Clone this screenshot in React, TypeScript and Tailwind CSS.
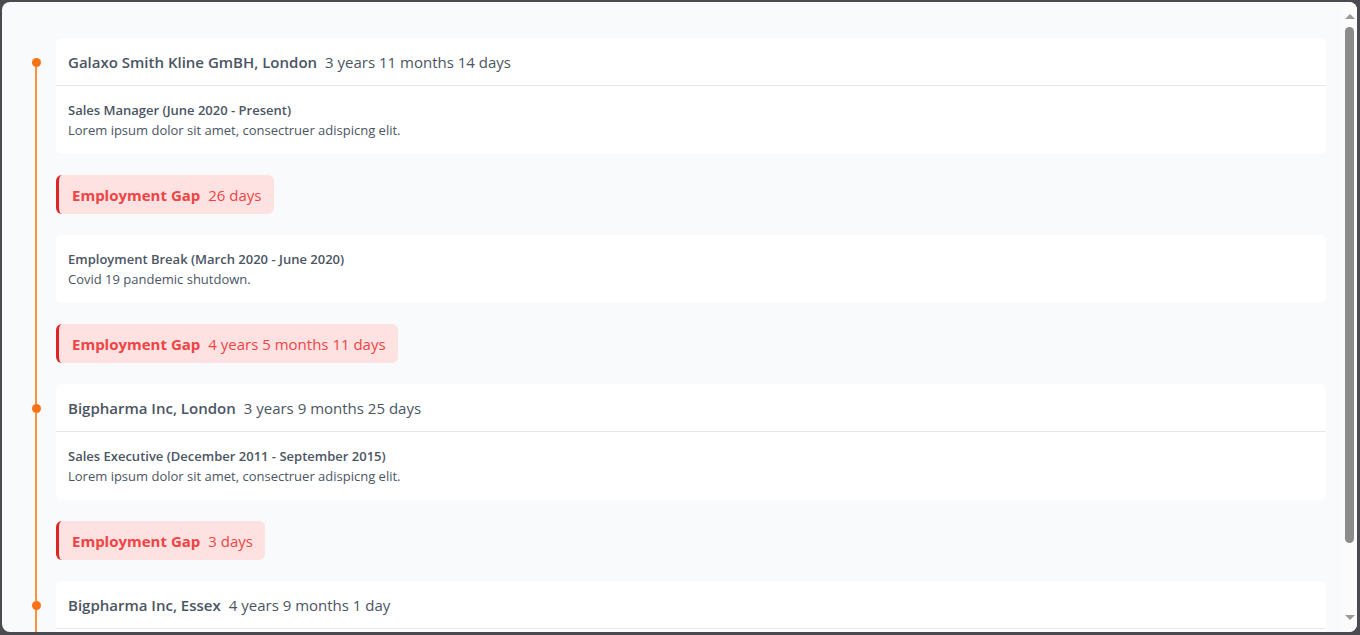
import React from "react";

type Item =
  | { kind: "job"; company: string; duration: string; role: string; text: string }
  | { kind: "break"; role: string; text: string }
  | { kind: "gap"; duration: string };

const ITEMS: Item[] = [
  {
    kind: "job",
    company: "Galaxo Smith Kline GmBH, London",
    duration: "3 years 11 months 14 days",
    role: "Sales Manager (June 2020 - Present)",
    text: "Lorem ipsum dolor sit amet, consectruer adispicng elit.",
  },
  { kind: "gap", duration: "26 days" },
  { kind: "break", role: "Employment Break (March 2020 - June 2020)", text: "Covid 19 pandemic shutdown." },
  { kind: "gap", duration: "4 years 5 months 11 days" },
  {
    kind: "job",
    company: "Bigpharma Inc, London",
    duration: "3 years 9 months 25 days",
    role: "Sales Executive (December 2011 - September 2015)",
    text: "Lorem ipsum dolor sit amet, consectruer adispicng elit.",
  },
  { kind: "gap", duration: "3 days" },
  {
    kind: "job",
    company: "Bigpharma Inc, Essex",
    duration: "4 years 9 months 1 day",
    role: "Area Sales Representative (May 2007 - February 2011)",
    text: "Lorem ipsum dolor sit amet, consectruer adispicng elit.",
  },
];

function Rail({ dot, first }: { dot: boolean; first: boolean }) {
  if (!dot) {
    return (
      <div className="flex w-10 shrink-0 justify-center">
        <div className="w-0.5 bg-[#fb923c]" />
      </div>
    );
  }
  return (
    <div className="flex w-10 shrink-0 flex-col items-center">
      <div className={`h-5 w-0.5 ${first ? "" : "bg-[#fb923c]"}`} />
      <div className="h-[9px] w-[9px] rounded-full bg-[#f97316]" />
      <div className="w-0.5 flex-1 bg-[#fb923c]" />
    </div>
  );
}

function Body({ role, text }: { role: string; text: string }) {
  return (
    <div className="px-3 py-3.5 text-[13px] leading-5 text-[#4b5563]">
      <div className="font-semibold">{role}</div>
      <div>{text}</div>
    </div>
  );
}

// classic scrollbar look, the page is taller than the window
function Scrollbar() {
  return (
    <div className="flex w-[15px] shrink-0 flex-col items-center bg-[#fbfbfb] pt-[12px] pb-[12px]">
      <svg width="10" height="5" viewBox="0 0 10 5">
        <path d="M5 0 L10 5 L0 5 Z" fill="#9a9a9a" />
      </svg>
      <div className="mt-[8px] h-[516px] w-[9px] rounded-full bg-[#8b8b8b]" />
      <div className="flex-1" />
      <svg width="10" height="5" viewBox="0 0 10 5">
        <path d="M0 0 L10 0 L5 5 Z" fill="#9a9a9a" />
      </svg>
    </div>
  );
}

export default function App() {
  return (
    <div className="h-screen bg-[#4a4a50] pl-[2px] pr-[3px] pt-[2px] pb-[3px]" style={{ fontFamily: '"Open Sans", sans-serif' }}>
      <div className="flex h-full overflow-hidden rounded-lg bg-[#f9fafb]">
        <div className="min-w-0 flex-1 overflow-hidden pt-9 pl-[14px] pr-4">
          {ITEMS.map((item, i) => (
            <div key={i} className="flex">
              <Rail dot={item.kind === "job"} first={i === 0} />
              <div className="min-w-0 flex-1 pb-[21px]">
                {item.kind === "job" && (
                  <div className="rounded-md bg-white">
                    <div className="flex h-12 items-center gap-2 border-b border-[#e5e7eb] px-3 pt-px text-[15px] text-[#4b5563]">
                      <span className="font-semibold">{item.company}</span>
                      <span>{item.duration}</span>
                    </div>
                    <Body role={item.role} text={item.text} />
                  </div>
                )}
                {item.kind === "break" && (
                  <div className="rounded-md bg-white">
                    <Body role={item.role} text={item.text} />
                  </div>
                )}
                {item.kind === "gap" && (
                  <div className="inline-flex h-[39px] items-center gap-2 rounded-md border-l-[3px] border-[#dc2626] bg-[#fee2e2] pl-[13px] pr-3 pt-px text-[15px] text-[#ef4444]">
                    <span className="font-bold">Employment Gap</span>
                    <span>{item.duration}</span>
                  </div>
                )}
              </div>
            </div>
          ))}
        </div>
        <Scrollbar />
      </div>
    </div>
  );
}
